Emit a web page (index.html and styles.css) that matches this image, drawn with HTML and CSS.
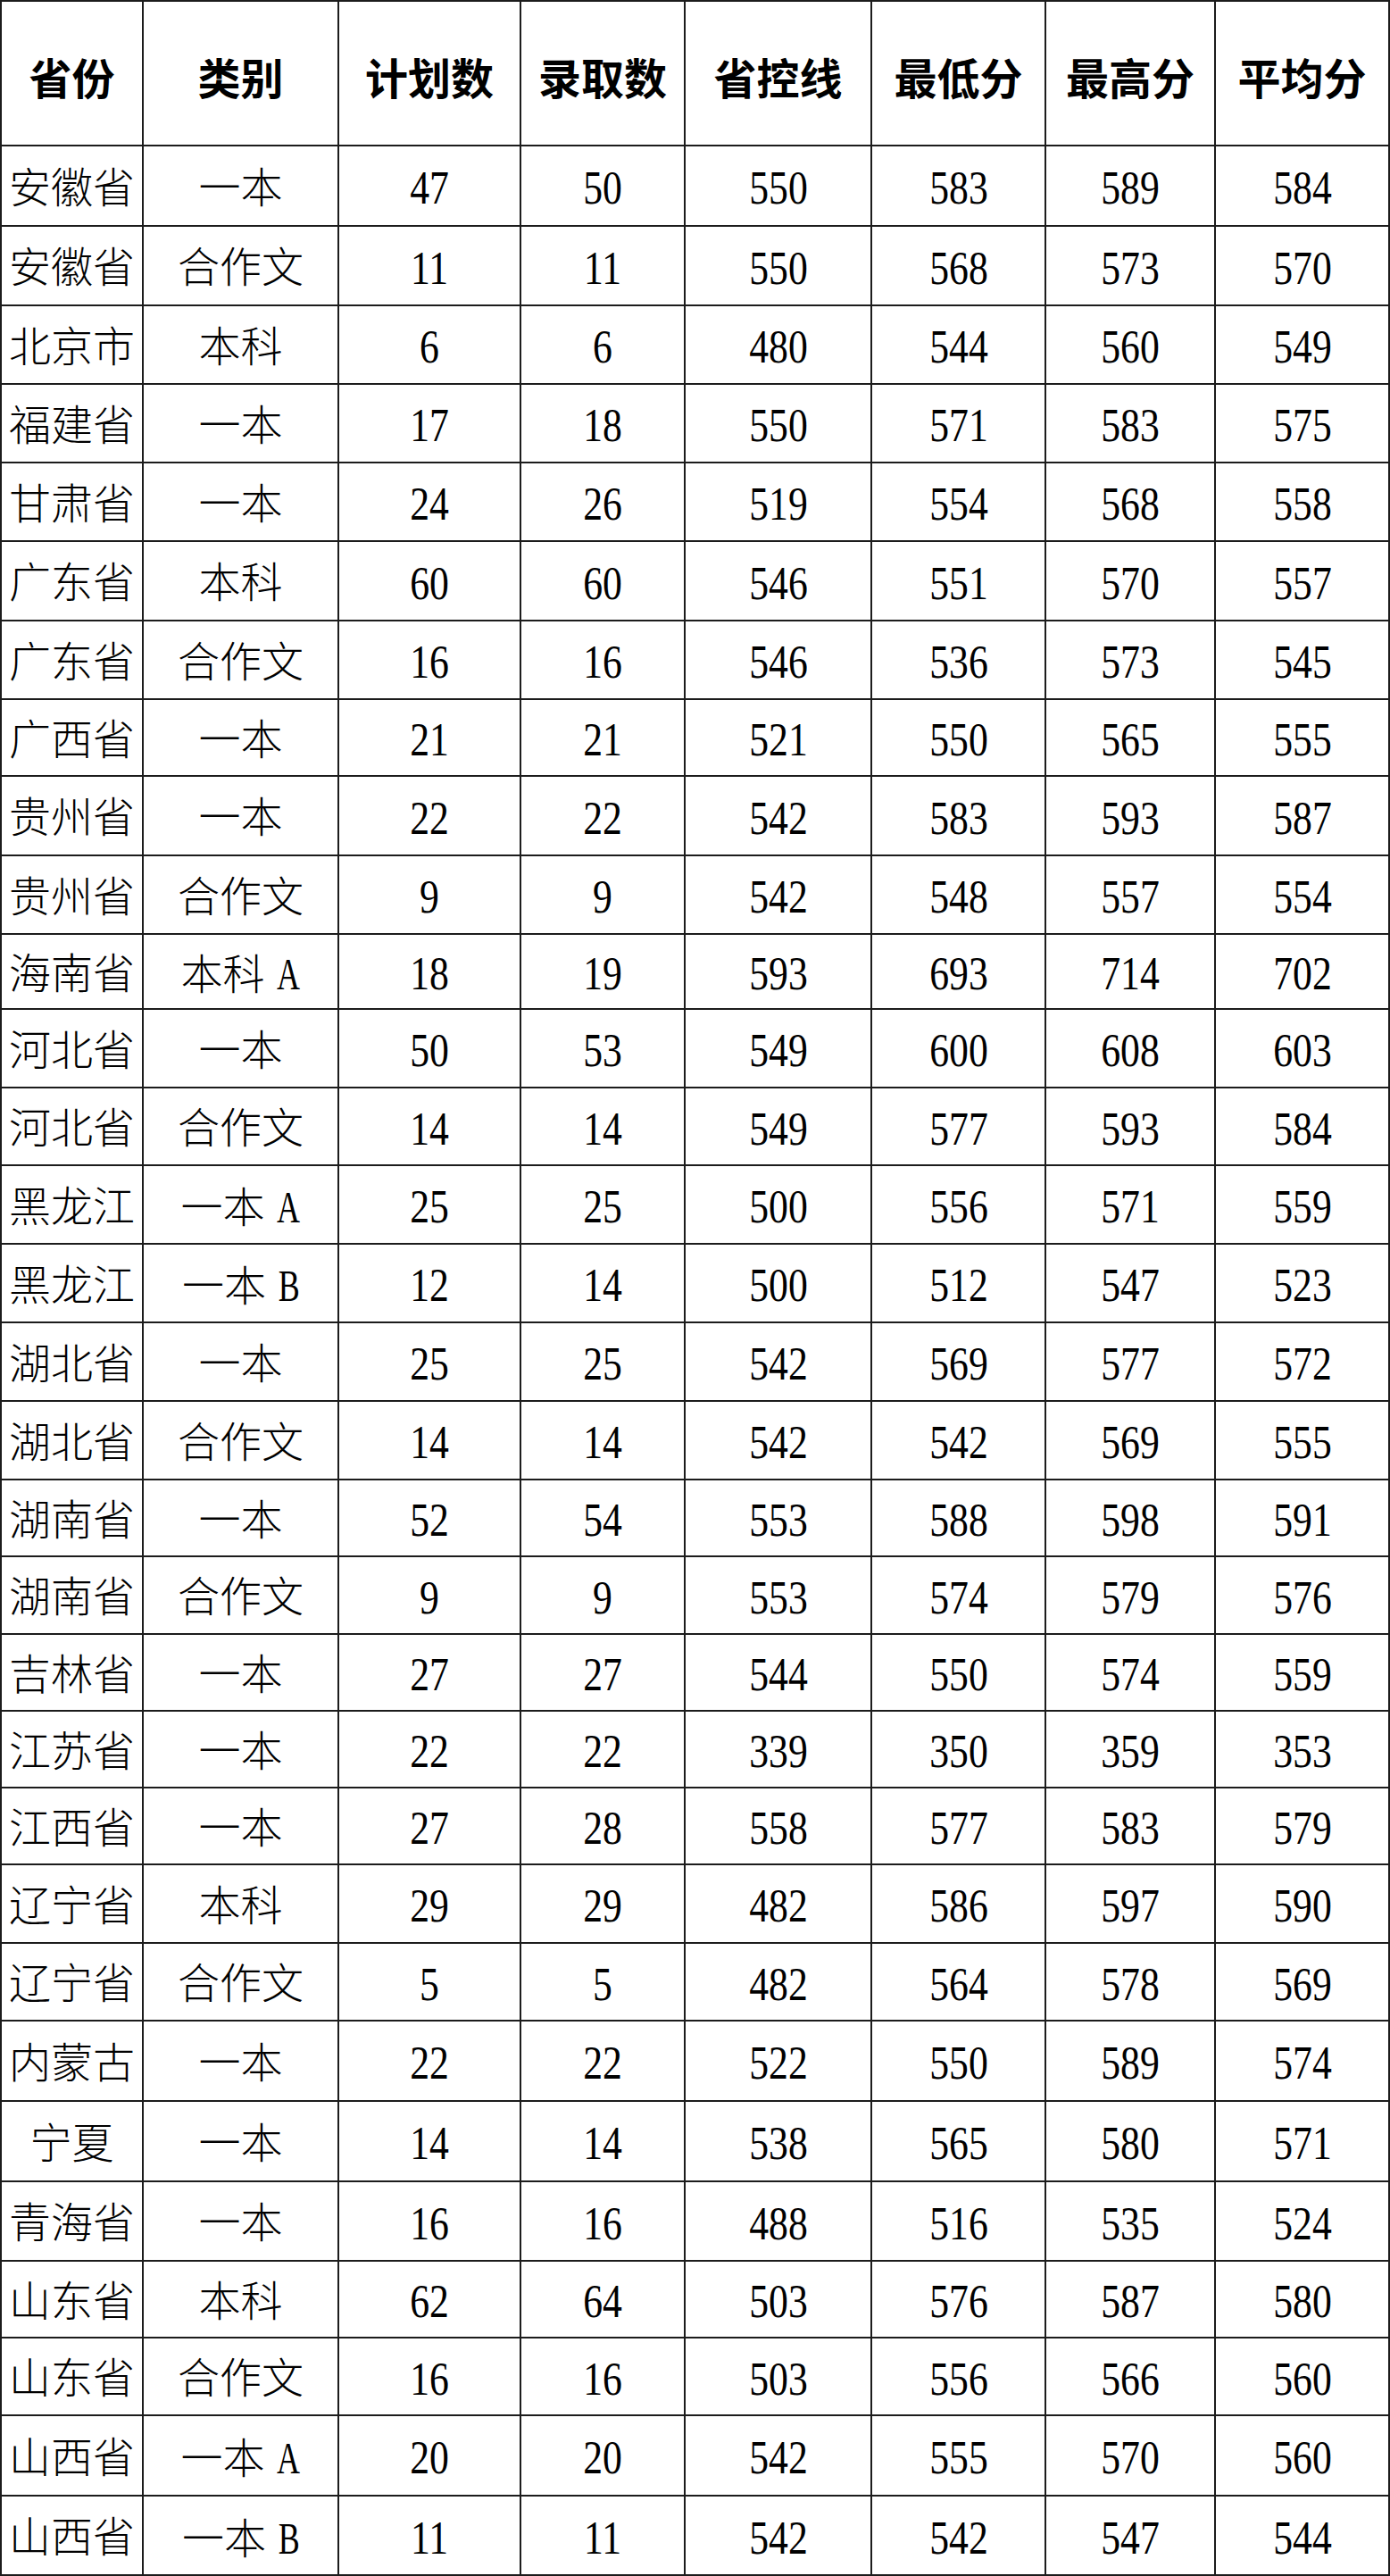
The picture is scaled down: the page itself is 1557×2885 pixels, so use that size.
FILE: index.html
```html
<!DOCTYPE html>
<html lang="zh-CN">
<head>
<meta charset="utf-8">
<title>录取分数</title>
<link rel="stylesheet" href="styles.css">
</head>
<body>
<div class="sheet">
  <div class="h">省份</div><div class="h">类别</div><div class="h">计划数</div><div class="h">录取数</div><div class="h">省控线</div><div class="h">最低分</div><div class="h">最高分</div><div class="h">平均分</div>

  <div class="c">安徽省</div><div class="c">一本</div><div class="c n"><span>47</span></div><div class="c n"><span>50</span></div><div class="c n"><span>550</span></div><div class="c n"><span>583</span></div><div class="c n"><span>589</span></div><div class="c n"><span>584</span></div>
  <div class="c">安徽省</div><div class="c">合作文</div><div class="c n"><span>11</span></div><div class="c n"><span>11</span></div><div class="c n"><span>550</span></div><div class="c n"><span>568</span></div><div class="c n"><span>573</span></div><div class="c n"><span>570</span></div>
  <div class="c">北京市</div><div class="c">本科</div><div class="c n"><span>6</span></div><div class="c n"><span>6</span></div><div class="c n"><span>480</span></div><div class="c n"><span>544</span></div><div class="c n"><span>560</span></div><div class="c n"><span>549</span></div>
  <div class="c">福建省</div><div class="c">一本</div><div class="c n"><span>17</span></div><div class="c n"><span>18</span></div><div class="c n"><span>550</span></div><div class="c n"><span>571</span></div><div class="c n"><span>583</span></div><div class="c n"><span>575</span></div>
  <div class="c">甘肃省</div><div class="c">一本</div><div class="c n"><span>24</span></div><div class="c n"><span>26</span></div><div class="c n"><span>519</span></div><div class="c n"><span>554</span></div><div class="c n"><span>568</span></div><div class="c n"><span>558</span></div>
  <div class="c">广东省</div><div class="c">本科</div><div class="c n"><span>60</span></div><div class="c n"><span>60</span></div><div class="c n"><span>546</span></div><div class="c n"><span>551</span></div><div class="c n"><span>570</span></div><div class="c n"><span>557</span></div>
  <div class="c">广东省</div><div class="c">合作文</div><div class="c n"><span>16</span></div><div class="c n"><span>16</span></div><div class="c n"><span>546</span></div><div class="c n"><span>536</span></div><div class="c n"><span>573</span></div><div class="c n"><span>545</span></div>
  <div class="c">广西省</div><div class="c">一本</div><div class="c n"><span>21</span></div><div class="c n"><span>21</span></div><div class="c n"><span>521</span></div><div class="c n"><span>550</span></div><div class="c n"><span>565</span></div><div class="c n"><span>555</span></div>
  <div class="c">贵州省</div><div class="c">一本</div><div class="c n"><span>22</span></div><div class="c n"><span>22</span></div><div class="c n"><span>542</span></div><div class="c n"><span>583</span></div><div class="c n"><span>593</span></div><div class="c n"><span>587</span></div>
  <div class="c">贵州省</div><div class="c">合作文</div><div class="c n"><span>9</span></div><div class="c n"><span>9</span></div><div class="c n"><span>542</span></div><div class="c n"><span>548</span></div><div class="c n"><span>557</span></div><div class="c n"><span>554</span></div>
  <div class="c">海南省</div><div class="c"><span>本科 <span class="lat">A</span></span></div><div class="c n"><span>18</span></div><div class="c n"><span>19</span></div><div class="c n"><span>593</span></div><div class="c n"><span>693</span></div><div class="c n"><span>714</span></div><div class="c n"><span>702</span></div>
  <div class="c">河北省</div><div class="c">一本</div><div class="c n"><span>50</span></div><div class="c n"><span>53</span></div><div class="c n"><span>549</span></div><div class="c n"><span>600</span></div><div class="c n"><span>608</span></div><div class="c n"><span>603</span></div>
  <div class="c">河北省</div><div class="c">合作文</div><div class="c n"><span>14</span></div><div class="c n"><span>14</span></div><div class="c n"><span>549</span></div><div class="c n"><span>577</span></div><div class="c n"><span>593</span></div><div class="c n"><span>584</span></div>
  <div class="c">黑龙江</div><div class="c"><span>一本 <span class="lat">A</span></span></div><div class="c n"><span>25</span></div><div class="c n"><span>25</span></div><div class="c n"><span>500</span></div><div class="c n"><span>556</span></div><div class="c n"><span>571</span></div><div class="c n"><span>559</span></div>
  <div class="c">黑龙江</div><div class="c"><span>一本 <span class="lat">B</span></span></div><div class="c n"><span>12</span></div><div class="c n"><span>14</span></div><div class="c n"><span>500</span></div><div class="c n"><span>512</span></div><div class="c n"><span>547</span></div><div class="c n"><span>523</span></div>
  <div class="c">湖北省</div><div class="c">一本</div><div class="c n"><span>25</span></div><div class="c n"><span>25</span></div><div class="c n"><span>542</span></div><div class="c n"><span>569</span></div><div class="c n"><span>577</span></div><div class="c n"><span>572</span></div>
  <div class="c">湖北省</div><div class="c">合作文</div><div class="c n"><span>14</span></div><div class="c n"><span>14</span></div><div class="c n"><span>542</span></div><div class="c n"><span>542</span></div><div class="c n"><span>569</span></div><div class="c n"><span>555</span></div>
  <div class="c">湖南省</div><div class="c">一本</div><div class="c n"><span>52</span></div><div class="c n"><span>54</span></div><div class="c n"><span>553</span></div><div class="c n"><span>588</span></div><div class="c n"><span>598</span></div><div class="c n"><span>591</span></div>
  <div class="c">湖南省</div><div class="c">合作文</div><div class="c n"><span>9</span></div><div class="c n"><span>9</span></div><div class="c n"><span>553</span></div><div class="c n"><span>574</span></div><div class="c n"><span>579</span></div><div class="c n"><span>576</span></div>
  <div class="c">吉林省</div><div class="c">一本</div><div class="c n"><span>27</span></div><div class="c n"><span>27</span></div><div class="c n"><span>544</span></div><div class="c n"><span>550</span></div><div class="c n"><span>574</span></div><div class="c n"><span>559</span></div>
  <div class="c">江苏省</div><div class="c">一本</div><div class="c n"><span>22</span></div><div class="c n"><span>22</span></div><div class="c n"><span>339</span></div><div class="c n"><span>350</span></div><div class="c n"><span>359</span></div><div class="c n"><span>353</span></div>
  <div class="c">江西省</div><div class="c">一本</div><div class="c n"><span>27</span></div><div class="c n"><span>28</span></div><div class="c n"><span>558</span></div><div class="c n"><span>577</span></div><div class="c n"><span>583</span></div><div class="c n"><span>579</span></div>
  <div class="c">辽宁省</div><div class="c">本科</div><div class="c n"><span>29</span></div><div class="c n"><span>29</span></div><div class="c n"><span>482</span></div><div class="c n"><span>586</span></div><div class="c n"><span>597</span></div><div class="c n"><span>590</span></div>
  <div class="c">辽宁省</div><div class="c">合作文</div><div class="c n"><span>5</span></div><div class="c n"><span>5</span></div><div class="c n"><span>482</span></div><div class="c n"><span>564</span></div><div class="c n"><span>578</span></div><div class="c n"><span>569</span></div>
  <div class="c">内蒙古</div><div class="c">一本</div><div class="c n"><span>22</span></div><div class="c n"><span>22</span></div><div class="c n"><span>522</span></div><div class="c n"><span>550</span></div><div class="c n"><span>589</span></div><div class="c n"><span>574</span></div>
  <div class="c">宁夏</div><div class="c">一本</div><div class="c n"><span>14</span></div><div class="c n"><span>14</span></div><div class="c n"><span>538</span></div><div class="c n"><span>565</span></div><div class="c n"><span>580</span></div><div class="c n"><span>571</span></div>
  <div class="c">青海省</div><div class="c">一本</div><div class="c n"><span>16</span></div><div class="c n"><span>16</span></div><div class="c n"><span>488</span></div><div class="c n"><span>516</span></div><div class="c n"><span>535</span></div><div class="c n"><span>524</span></div>
  <div class="c">山东省</div><div class="c">本科</div><div class="c n"><span>62</span></div><div class="c n"><span>64</span></div><div class="c n"><span>503</span></div><div class="c n"><span>576</span></div><div class="c n"><span>587</span></div><div class="c n"><span>580</span></div>
  <div class="c">山东省</div><div class="c">合作文</div><div class="c n"><span>16</span></div><div class="c n"><span>16</span></div><div class="c n"><span>503</span></div><div class="c n"><span>556</span></div><div class="c n"><span>566</span></div><div class="c n"><span>560</span></div>
  <div class="c">山西省</div><div class="c"><span>一本 <span class="lat">A</span></span></div><div class="c n"><span>20</span></div><div class="c n"><span>20</span></div><div class="c n"><span>542</span></div><div class="c n"><span>555</span></div><div class="c n"><span>570</span></div><div class="c n"><span>560</span></div>
  <div class="c">山西省</div><div class="c"><span>一本 <span class="lat">B</span></span></div><div class="c n"><span>11</span></div><div class="c n"><span>11</span></div><div class="c n"><span>542</span></div><div class="c n"><span>542</span></div><div class="c n"><span>547</span></div><div class="c n"><span>544</span></div>
</div>
</body>
</html>
```

FILE: styles.css
```css
html, body {
  margin: 0;
  padding: 0;
  background: #ffffff;
}

.sheet {
  display: grid;
  width: 1557px;
  box-sizing: border-box;
  padding: 2px;
  gap: 2px;
  background: #1c1c1c;
  grid-template-columns: 157px 217px 202px 182px 207px 193px 188px 193px;
  grid-template-rows:
    160px
    88px 87px 86px 86px 86px 87px 86px 84px 87px 86px
    82px 86px 85px 86px 86px 86px 86px 84px 85px 84px
    84px 84px 86px 85px 88px 88px 87px 84px 85px 88px
    87px;
  font-family: "Liberation Serif", "Noto Sans CJK SC", serif;
  color: #000;
}

.h,
.c {
  background: #ffffff;
  display: flex;
  align-items: center;
  justify-content: center;
  white-space: nowrap;
  line-height: 1;
  box-sizing: border-box;
}

.h {
  font-family: "Noto Sans CJK SC", sans-serif;
  font-weight: 700;
  font-size: 48px;
  padding-top: 6px;
}

.c {
  font-family: "Liberation Serif", "Noto Sans CJK SC", serif;
  font-weight: 300;
  font-size: 47px;
  padding-top: 6px;
}

.c.n span {
  display: inline-block;
  font-size: 52px;
  font-weight: 400;
  transform: scaleX(0.84);
}

.lat {
  display: inline-block;
  font-size: 50px;
  font-weight: 400;
  transform: scaleX(0.72);
  margin-left: -3px;
  margin-right: -5px;
}
```
